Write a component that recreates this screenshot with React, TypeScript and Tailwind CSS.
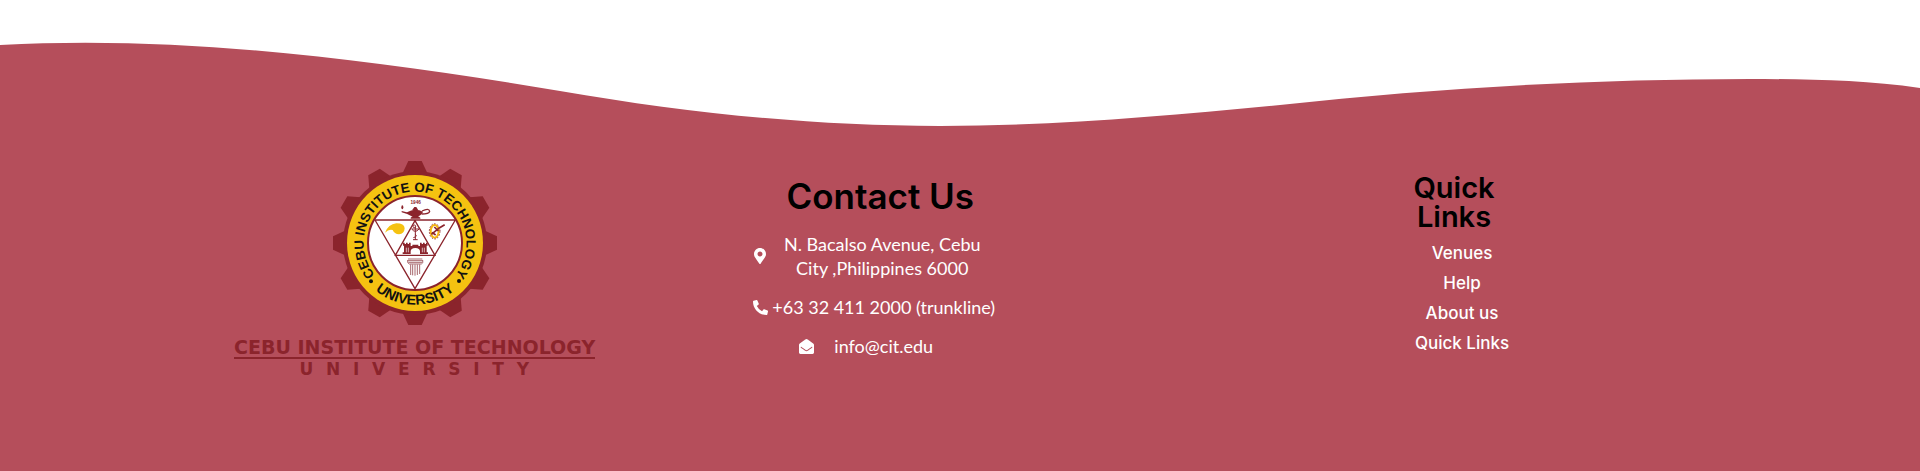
import { FaEnvelopeOpen, FaMapMarkerAlt, FaPhoneAlt } from "react-icons/fa";

const TEETH = [0, 30, 60, 90, 120, 150, 180, 210, 240, 270, 300, 330];

const LINKS = ["Venues", "Help", "About us", "Quick Links"];

function Wave() {
  return (
    <svg
      className="block h-32 w-full"
      viewBox="0 0 1920 128"
      preserveAspectRatio="none"
      aria-hidden="true"
    >
      <path
        fill="#fff"
        d="M0 0V45C187 35 373 60 560 91C687 113 813 126 940 126C1053 126 1167 116 1280 105C1436 88 1593 79 1749 79C1806 79 1863 80 1920 88V0Z"
      />
    </svg>
  );
}

function Seal() {
  return (
    <svg
      className="size-[164px]"
      viewBox="42 32 492 492"
      role="img"
      aria-label="Cebu Institute of Technology University seal"
    >
      <defs>
        <path id="ring-top" d="M288 432A154 154 0 0 1 288 124A154 154 0 0 1 288 432" />
        <path id="ring-bottom" d="M103 278A185 185 0 0 0 473 278" />
      </defs>
      <g fill="#8b242c">
        {TEETH.map((angle) => (
          <path
            key={angle}
            d="M251 68L268 32H308L325 68Z"
            transform={`rotate(${angle} 288 278)`}
          />
        ))}
        <circle cx="288" cy="278" r="216" />
      </g>
      <circle cx="288" cy="278" r="204" fill="#f5c211" />
      <circle cx="288" cy="278" r="141" fill="#fff" stroke="#8b242c" strokeWidth="6" />
      <g
        fill="#111"
        fontFamily="'Liberation Sans', Arial, sans-serif"
        fontWeight="700"
        textAnchor="middle"
      >
        <text fontSize="40">
          <textPath href="#ring-top" startOffset="50%">
            CEBU INSTITUTE OF TECHNOLOGY
          </textPath>
        </text>
        <text fontSize="43">
          <textPath href="#ring-bottom" startOffset="50%">
            UNIVERSITY
          </textPath>
        </text>
      </g>
      <circle cx="156" cy="393" r="6" fill="#111" />
      <circle cx="420" cy="392" r="6" fill="#111" />

      <path
        d="M168 209H409L288 415ZM288 211L229 315H348Z"
        fill="none"
        stroke="#8b242c"
        strokeWidth="4"
      />

      <text
        x="290"
        y="162"
        fontSize="14"
        fontWeight="700"
        textAnchor="middle"
        fill="#8b242c"
        fontFamily="'Liberation Sans', Arial, sans-serif"
      >
        1946
      </text>
      <g fill="#8b242c">
        <path d="M248 182L264 186Q277 179 288 178Q302 178 312 184Q308 195 296 198H278Q266 190 248 186Z" />
        <path d="M286 170H292L298 180H279Z" />
        <path d="M282 196H296L304 202V205H275V202Z" />
        <ellipse cx="250" cy="171" rx="3" ry="6" />
      </g>
      <path
        d="M309 182Q330 172 332 183Q330 191 308 191"
        fill="none"
        stroke="#8b242c"
        strokeWidth="4"
      />

      <path
        fill="#f5c211"
        d="M198 247Q208 222 232 219Q256 219 257 234Q256 251 240 252Q226 251 221 239Q210 235 198 247Z"
      />

      <ellipse
        cx="347"
        cy="243"
        rx="12"
        ry="19"
        fill="none"
        stroke="#f5b511"
        strokeWidth="6"
      />
      <ellipse
        cx="347"
        cy="243"
        rx="16"
        ry="23"
        fill="none"
        stroke="#8b242c"
        strokeWidth="3"
        strokeDasharray="4 5"
      />
      <path
        d="M337 252L362 232L377 223M346 230L358 242M339 246L350 254"
        fill="none"
        stroke="#8b242c"
        strokeWidth="5"
      />

      <g fill="none" stroke="#8b242c" strokeWidth="3">
        <path d="M289 228V268M282 268H296M278 236Q289 250 300 236ZM283 262Q298 258 288 252" />
        <circle cx="286" cy="228" r="4" />
      </g>

      <path
        fill="#8b242c"
        d="M252 277H257V281H261V277H266V281H270V277H275V287H280V283H298V287H303V277H308V281H312V277H317V281H321V277H326V286H323V306H327V311H303V303Q303 294 289 293Q275 294 275 303V311H251V306H255V286H252Z"
      />
      <path d="M262 292V306M268 292V306M310 292V306M316 292V306" stroke="#fff" strokeWidth="2" />

      <g stroke="#a8696e" strokeWidth="3" fill="none">
        <path d="M267 326H310M266 331H312M268 336H310M271 341H307" />
        <path d="M275 342V374M281 342V375M288 342V376M295 342V374M302 342V371" />
        <path d="M266 329Q264 339 271 341M311 329Q314 339 307 341" />
      </g>
    </svg>
  );
}

export default function App() {
  return (
    <footer className="min-h-screen w-full bg-[#b54e5b]">
      <Wave />
      <div className="grid grid-cols-[368fr_558fr_608fr] items-start pt-[33px] pr-[8%] pb-20 pl-[12%]">
        <section className="flex flex-col items-center">
          <Seal />
          <div className="mt-3 flex flex-col items-center font-['DejaVu_Sans',sans-serif] font-bold whitespace-nowrap text-[#8b242c]">
            <p className="border-b-2 border-[#8b242c] text-[19px] leading-5">
              CEBU INSTITUTE OF TECHNOLOGY
            </p>
            <p className="pl-3 text-[17px] leading-5 tracking-[0.75em]">UNIVERSITY</p>
          </div>
        </section>

        <section className="flex flex-col items-center pt-[15px]">
          <h2 className="pl-1 font-[Inter,sans-serif] text-[35px] leading-10 font-semibold text-black">
            Contact Us
          </h2>
          <address className="mt-4 flex flex-col items-center gap-[15px] pr-2 font-[Lato,sans-serif] text-lg leading-6 text-white not-italic">
            <p className="flex items-center gap-3 pr-2">
              <FaMapMarkerAlt className="h-4 w-3 shrink-0" />
              <span className="w-52 text-center">N. Bacalso Avenue, Cebu City ,Philippines 6000</span>
            </p>
            <p className="flex items-center gap-1">
              <FaPhoneAlt className="size-[15px] shrink-0" />
              <span>+63 32 411 2000 (trunkline)</span>
            </p>
            <p className="flex items-center gap-5 pr-4">
              <FaEnvelopeOpen className="size-[15px] shrink-0" />
              <span>info@cit.edu</span>
            </p>
          </address>
        </section>

        <nav
          aria-labelledby="quick-links"
          className="flex flex-col items-center pt-3 pr-4 font-[Inter,sans-serif] text-white"
        >
          <h2
            id="quick-links"
            className="w-24 text-center text-[29px] leading-[29px] font-semibold text-black"
          >
            Quick Links
          </h2>
          <ul className="mt-[7px] flex flex-col items-center pl-4 text-[17px] leading-[30px] font-medium">
            {LINKS.map((link) => (
              <li key={link}>
                <a href="#">{link}</a>
              </li>
            ))}
          </ul>
        </nav>
      </div>
    </footer>
  );
}
